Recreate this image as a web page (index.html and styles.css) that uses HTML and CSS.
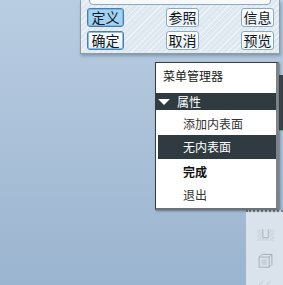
FILE: index.html
```html
<!DOCTYPE html>
<html>
<head>
<meta charset="utf-8">
<link rel="stylesheet" href="styles.css">
</head>
<body>
<div class="desk">
  <div class="dock">
    <svg class="ico" width="19" height="13" viewBox="0 0 19 13"><defs><pattern id="h" width="3" height="3" patternUnits="userSpaceOnUse" patternTransform="rotate(45)"><rect width="1.5" height="3" fill="#c9d2d9"/></pattern></defs><path d="M0.5 0.5H6.5V9.5H12.5V0.5H18.5V12.5H0.5Z" fill="url(#h)" stroke="#d3dbe1"/><path d="M6.5 0.5V9.5H12.5V0.5" fill="none" stroke="#aab4bc"/></svg>
    <svg class="ico" width="17" height="16" viewBox="0 0 17 16"><path d="M1.5 4.5H12.5V15.5H1.5Z M1.5 4.5L4.5 1.5H15.5V12.5L12.5 15.5 M12.5 4.5L15.5 1.5" fill="none" stroke="#a2acb4"/><rect x="4" y="7" width="6" height="6" fill="#c8d0d6"/></svg>
    <svg class="ico" width="18" height="6" viewBox="0 0 18 6"><path d="M1 6L6 1 M9 6L14 1" stroke="#b8c2ca" fill="none"/></svg>
  </div>
  <div class="panel">
    <div class="field"></div>
    <div class="btns">
      <button class="btn on">定义</button>
      <button class="btn">参照</button>
      <button class="btn">信息</button>
      <button class="btn def">确定</button>
      <button class="btn">取消</button>
      <button class="btn">预览</button>
    </div>
  </div>
  <div class="scroll"></div>
  <div class="menu">
    <div class="title">菜单管理器</div>
    <div class="group"><span class="tri"></span>属性</div>
    <div class="item">添加内表面</div>
    <div class="item sel">无内表面</div>
    <div class="item bold">完成</div>
    <div class="item">退出</div>
  </div>
</div>
</body>
</html>
```
FILE: styles.css
```css
html, body { margin: 0; padding: 0; }
body {
  width: 283px; height: 285px; overflow: hidden;
  font-family: "Noto Sans CJK SC", "Microsoft YaHei", sans-serif;
  font-size: 12px;
}
.desk {
  position: relative; width: 283px; height: 285px;
  background: linear-gradient(#b9cde2, #9bb4cf);
}
.dock {
  position: absolute; left: 246px; top: 210px; width: 37px; height: 75px;
  background: #dae3eb;
  border-top: 2px dotted #76848f;
  display: flex; flex-direction: column; align-items: center; gap: 12px;
  padding: 17px 0 0 2px; box-sizing: border-box;
}
.panel {
  position: absolute; left: 80px; top: 0; width: 200px; height: 54px;
  box-sizing: border-box;
  border-left: 1px solid #8c9aa6; border-right: 1px solid #8c9aa6; border-bottom: 1px solid #8c9aa6;
  background: #dde8f1 repeating-linear-gradient(135deg, rgba(255,255,255,0.5) 0 1px, transparent 1px 4px);
  box-shadow: 1px 2px 3px rgba(40,60,80,0.35);
}
.field {
  margin: -6px 8px 0 8px; height: 9px;
  border: 1px solid #8fa8bd; border-radius: 4px; background: #f6f9fc;
}
.btns {
  display: grid; grid-template-columns: 37px 33px 33px;
  justify-content: space-between; row-gap: 4px;
  padding: 3px 5px 0 6px;
}
.btn {
  height: 19px; padding: 0; margin: 0;
  font: 14px "Noto Sans CJK SC", sans-serif; line-height: 17px; color: #101820;
  border: 1px solid #86a9c4; border-radius: 3px;
  background: linear-gradient(#ffffff, #e4eef6);
  box-shadow: inset 0 0 0 1px #fff;
}
.btn.on {
  border: 1px solid #4d7ea6;
  background: #a4d2f5;
  box-shadow: inset 0 0 0 1px #7fb6e0;
}
.btn.def {
  border: 1px solid #4d7ea6;
  box-shadow: inset 0 0 0 1px #8dbde0;
  background: linear-gradient(#ffffff, #e8f1f8);
}
.scroll {
  position: absolute; left: 277px; top: 75px; width: 6px; height: 55px;
  background: linear-gradient(90deg, #5c666c, #323a3e);
  border-bottom: 1px solid #4fc06c;
}
.menu {
  position: absolute; left: 155px; top: 62px; width: 124px; height: 148px;
  box-sizing: border-box;
  background: #fff;
  border: 1px solid #3a3e42;
  border-right: 3px solid #7c8288;
  border-bottom: 2px solid #6c7278;
  box-shadow: 1px 1px 2px rgba(0,0,0,0.4);
  color: #1a1a1a;
}
.title { height: 25px; line-height: 26px; padding-left: 7px; }
.group {
  margin-top: 5px; height: 17px; line-height: 17px;
  background: #2f3b41; color: #fff;
  display: flex; align-items: center; gap: 7px; padding-left: 2px;
}
.tri {
  width: 0; height: 0;
  border-left: 6px solid transparent; border-right: 6px solid transparent;
  border-top: 6px solid #fff;
}
.item { height: 23px; line-height: 23px; padding-left: 27px; color: #333; }
.group + .item { margin-top: 2px; }
.item.sel {
  margin-left: 2px; padding-left: 25px;
  height: 24px; line-height: 24px;
  background: #2f3b41; color: #fff;
}
.item.bold { font-weight: bold; color: #111; margin-top: 1px; }
```
